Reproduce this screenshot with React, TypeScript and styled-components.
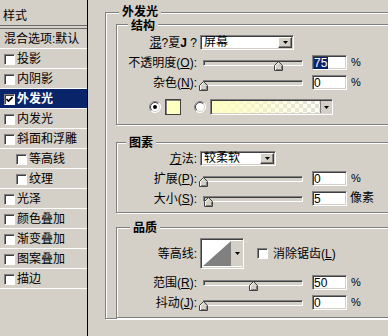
import React from "react";
import styled, { createGlobalStyle } from "styled-components";

const FACE = `"Liberation Sans", "Noto Sans CJK SC", sans-serif`;

const Global = createGlobalStyle`
  html, body { margin: 0; padding: 0; background: #d4d0c8; }
  body { font-family: ${FACE}; font-size: 12px; color: #000; }
  * { box-sizing: border-box; }
`;

const Window = styled.div`
  width: 388px;
  height: 336px;
  overflow: hidden;
  display: flex;
  background: #d4d0c8;
`;

/* ---------- sidebar ---------- */
const Sidebar = styled.div`
  width: 88px;
  flex: none;
  height: 336px;
  border-right: 1px solid #000;
`;

const SideHeader = styled.div`
  height: 29px;
  padding: 7px 0 0 3px;
  border-bottom: 4px double #6a6a6a;
  line-height: 18px;
`;

const SideRow = styled.div<{ $active?: boolean; $indent?: boolean }>`
  height: 20px;
  border-bottom: 1px solid #fff;
  display: flex;
  align-items: center;
  padding: 1px 0 0 ${(p) => (p.$indent ? 16 : 4)}px;
  gap: 2px;
  line-height: 18px;
  white-space: nowrap;
  background: ${(p) => (p.$active ? "#0a246a" : "transparent")};
  color: ${(p) => (p.$active ? "#fff" : "#000")};
  font-weight: ${(p) => (p.$active ? "bold" : "normal")};
`;

const Check = styled.span`
  width: 11px;
  height: 11px;
  flex: none;
  background: #fff;
  border: 1px solid;
  border-color: #808080 #fff #fff #808080;
  box-shadow: inset 1px 1px 0 #404040;
  display: flex;
  align-items: center;
  justify-content: center;
`;

const CheckBox = ({ checked }: { checked?: boolean }) => (
  <Check>
    {checked && (
      <svg width="7" height="7" viewBox="0 0 7 7">
        <path d="M0.5 3 L2.5 5 L6.5 1" stroke="#000" strokeWidth="1.6" fill="none" />
      </svg>
    )}
  </Check>
);

/* ---------- right panel ---------- */
const Main = styled.div`
  flex: none;
  padding: 12px 0 0 17px;
`;

const Group = styled.div<{ $pad: string; $mt?: number; $w?: number }>`
  position: relative;
  ${(p) => (p.$w ? `width: ${p.$w}px;` : "")}
  margin-top: ${(p) => p.$mt ?? 0}px;
  border: 1px solid #808080;
  box-shadow: inset 1px 1px 0 #fff, 1px 1px 0 #fff;
  padding: ${(p) => p.$pad};
`;

const Legend = styled.span<{ $left: number; $top?: number }>`
  position: absolute;
  top: ${(p) => p.$top ?? -6}px;
  left: ${(p) => p.$left}px;
  padding: 0 3px;
  background: #d4d0c8;
  font-weight: bold;
  line-height: 12px;
  white-space: nowrap;
`;

const Row = styled.div<{ $h?: number; $mt?: number }>`
  display: flex;
  align-items: center;
  height: ${(p) => p.$h ?? 20}px;
  margin-top: ${(p) => p.$mt ?? 0}px;
`;

const Label = styled.span`
  width: 80px;
  flex: none;
  margin-right: 3px;
  text-align: right;
  white-space: nowrap;
  line-height: 16px;
  padding-top: 1px;
`;

const Key = styled.span`
  text-decoration: underline;
`;

const Sunken = styled.div`
  background: #fff;
  border: 1px solid;
  border-color: #808080 #fff #fff #808080;
  box-shadow: inset 1px 1px 0 #404040, inset -1px -1px 0 #d4d0c8;
`;

const SelectBox = styled(Sunken)<{ $w: number }>`
  width: ${(p) => p.$w}px;
  height: 15px;
  flex: none;
  display: flex;
  align-items: center;
  justify-content: space-between;
  padding: 1px 1px 1px 3px;
  line-height: 12px;
`;

const DropBtn = styled.span`
  width: 14px;
  height: 11px;
  flex: none;
  background: #d4d0c8;
  border: 1px solid;
  border-color: #fff #404040 #404040 #fff;
  box-shadow: inset -1px -1px 0 #808080;
  display: flex;
  align-items: center;
  justify-content: center;
`;

const Arrow = () => (
  <svg width="5" height="3" viewBox="0 0 5 3">
    <polygon points="0,0 5,0 2.5,3" fill="#000" />
  </svg>
);

const SliderBox = styled.div`
  position: relative;
  width: 103px;
  height: 20px;
  flex: none;
  padding: 8px 0 0 3px;
`;

const Track = styled.div`
  width: 100px;
  height: 6px;
  background: #d4d0c8;
  border: 1px solid;
  border-color: #808080 #fff #fff #808080;
  box-shadow: inset 1px 1px 0 #404040;
`;

const ThumbHolder = styled.span`
  position: absolute;
  top: 9px;
  width: 9px;
  height: 10px;
  display: block;
  line-height: 0;
`;

const Thumb = ({ at }: { at: number }) => (
  <ThumbHolder style={{ left: at - 1 }}>
    <svg width="9" height="10" viewBox="0 0 9 10">
      <polygon points="0.5,4.5 4.5,0.5 8.5,4.5 8.5,9.5 0.5,9.5" fill="#d4d0c8" stroke="#404040" />
      <polyline points="1.5,9 1.5,4.9 4.5,1.9" fill="none" stroke="#fff" />
      <polyline points="2,8.5 7.5,8.5 7.5,5" fill="none" stroke="#808080" />
    </svg>
  </ThumbHolder>
);

const NumBox = styled(Sunken)`
  width: 35px;
  height: 15px;
  flex: none;
  margin-left: 9px;
  padding: 1px 0 0 1px;
  display: flex;
  align-items: center;
  font-family: "Liberation Sans", sans-serif;
  font-size: 12px;
  line-height: 12px;
`;

const Sel = styled.span`
  background: #0a246a;
  color: #fff;
  padding: 0 1px 0 0;
`;

const Unit = styled.span`
  margin-left: 4px;
  font-size: 11px;
  white-space: nowrap;
`;

const UnitCjk = styled.span`
  margin-left: 3px;
  white-space: nowrap;
  line-height: 16px;
`;

const SliderRow = ({
  label,
  value,
  at,
  unit,
  selected,
}: {
  label: React.ReactNode;
  value: string;
  at: number;
  unit: string;
  selected?: boolean;
}) => (
  <Row>
    <Label>{label}</Label>
    <SliderBox>
      <Track />
      <Thumb at={at} />
    </SliderBox>
    <NumBox>{selected ? <Sel>{value}</Sel> : value}</NumBox>
    {unit === "%" ? <Unit>%</Unit> : <UnitCjk>{unit}</UnitCjk>}
  </Row>
);

/* color row */
const ColorRow = styled.div`
  display: flex;
  align-items: center;
  height: 16px;
  margin-top: 7px;
  padding-left: 32px;
`;

const Radio = ({ on }: { on?: boolean }) => (
  <svg width="12" height="12" viewBox="0 0 12 12" style={{ flex: "none" }}>
    <circle cx="6" cy="6" r="5.5" fill="#fff" />
    <path d="M2.1,9.9 A5.5,5.5 0 0 1 9.9,2.1" stroke="#808080" fill="none" />
    <path d="M9.9,2.1 A5.5,5.5 0 0 1 2.1,9.9" stroke="#fff" fill="none" />
    <path d="M2.8,9.2 A4.5,4.5 0 0 1 9.2,2.8" stroke="#404040" fill="none" />
    <path d="M9.2,2.8 A4.5,4.5 0 0 1 2.8,9.2" stroke="#d4d0c8" fill="none" />
    {on && <circle cx="6" cy="6" r="2" fill="#000" />}
  </svg>
);

const Swatch = styled.span`
  width: 16px;
  height: 16px;
  flex: none;
  margin: 0 13px 0 4px;
  background: #ffffc0;
  border: 1px solid #404040;
  box-shadow: inset 1px 1px 0 #808080;
`;

const GradientBox = styled(Sunken)`
  width: 123px;
  height: 16px;
  flex: none;
  margin-left: 4px;
  display: flex;
  justify-content: flex-end;
  padding: 1px;
  background:
    linear-gradient(to right, #ffffc0, rgba(255, 255, 192, 0)),
    repeating-conic-gradient(#dcdcdc 0% 25%, #fff 0% 50%) 0 0 / 8px 8px;
`;

const GradBtn = styled.span`
  width: 11px;
  height: 12px;
  background: #d4d0c8;
  border-left: 1px solid #808080;
  display: flex;
  align-items: center;
  justify-content: center;
`;

/* contour */
const ContourBox = styled(Sunken)`
  width: 44px;
  height: 31px;
  flex: none;
  display: flex;
  padding: 2px;
`;

const ContourStrip = styled.span`
  width: 12px;
  flex: none;
  background: #d4d0c8;
  display: flex;
  align-items: center;
  justify-content: center;
`;

const AntiAlias = styled.label`
  display: flex;
  align-items: center;
  margin-left: 13px;
  gap: 5px;
  white-space: nowrap;
  line-height: 16px;
`;

export default function App() {
  return (
    <>
      <Global />
      <Window>
        <Sidebar>
          <SideHeader>样式</SideHeader>
          <SideRow>混合选项:默认</SideRow>
          <SideRow><CheckBox />投影</SideRow>
          <SideRow><CheckBox />内阴影</SideRow>
          <SideRow $active><CheckBox checked />外发光</SideRow>
          <SideRow><CheckBox />内发光</SideRow>
          <SideRow><CheckBox />斜面和浮雕</SideRow>
          <SideRow $indent><CheckBox />等高线</SideRow>
          <SideRow $indent><CheckBox />纹理</SideRow>
          <SideRow><CheckBox />光泽</SideRow>
          <SideRow><CheckBox />颜色叠加</SideRow>
          <SideRow><CheckBox />渐变叠加</SideRow>
          <SideRow><CheckBox />图案叠加</SideRow>
          <SideRow><CheckBox />描边</SideRow>
        </Sidebar>

        <Main>
          <Group $w={330} $pad="11px 10px 0 10px">
            <Legend $left={13} $top={-7}>外发光</Legend>

            <Group $pad="7px 0 9px 0">
              <Legend $left={11} $top={-5}>结构</Legend>
              <Row>
                <Label><Key>混</Key>?夏<b>J</b> ?</Label>
                <SelectBox $w={94}>
                  <span>屏幕</span>
                  <DropBtn><Arrow /></DropBtn>
                </SelectBox>
              </Row>
              <SliderRow label={<>不透明度(<Key>O</Key>):</>} value="75" at={75} unit="%" selected />
              <SliderRow label={<>杂色(<Key>N</Key>):</>} value="0" at={0} unit="%" />
              <ColorRow>
                <Radio on />
                <Swatch />
                <Radio />
                <GradientBox>
                  <GradBtn><Arrow /></GradBtn>
                </GradientBox>
              </ColorRow>
            </Group>

            <Group $mt={17} $pad="5px 0 4px 0">
              <Legend $left={9}>图素</Legend>
              <Row>
                <Label><Key>方</Key>法:</Label>
                <SelectBox $w={76}>
                  <span>较柔软</span>
                  <DropBtn><Arrow /></DropBtn>
                </SelectBox>
              </Row>
              <SliderRow label={<>扩展(<Key>P</Key>):</>} value="0" at={0} unit="%" />
              <SliderRow label={<>大小(<Key>S</Key>):</>} value="5" at={5} unit="像素" />
            </Group>

            <Group $mt={14} $pad="10px 0 5px 0">
              <Legend $left={13}>品质</Legend>
              <Row $h={31}>
                <Label>等高线:</Label>
                <ContourBox>
                  <svg width="28" height="25" viewBox="0 0 28 25" style={{ flex: "none" }}>
                    <rect width="28" height="25" fill="#fff" />
                    <polygon points="0,25 28,0 28,25" fill="#808080" />
                  </svg>
                  <ContourStrip><Arrow /></ContourStrip>
                </ContourBox>
                <AntiAlias>
                  <CheckBox />
                  <span>消除锯齿(<Key>L</Key>)</span>
                </AntiAlias>
              </Row>
              <Row $mt={3}>
                <Label>范围(<Key>R</Key>):</Label>
                <SliderBox>
                  <Track />
                  <Thumb at={50} />
                </SliderBox>
                <NumBox>50</NumBox>
                <Unit>%</Unit>
              </Row>
              <SliderRow label={<>抖动(<Key>J</Key>):</>} value="0" at={0} unit="%" />
            </Group>
          </Group>
        </Main>
      </Window>
    </>
  );
}
